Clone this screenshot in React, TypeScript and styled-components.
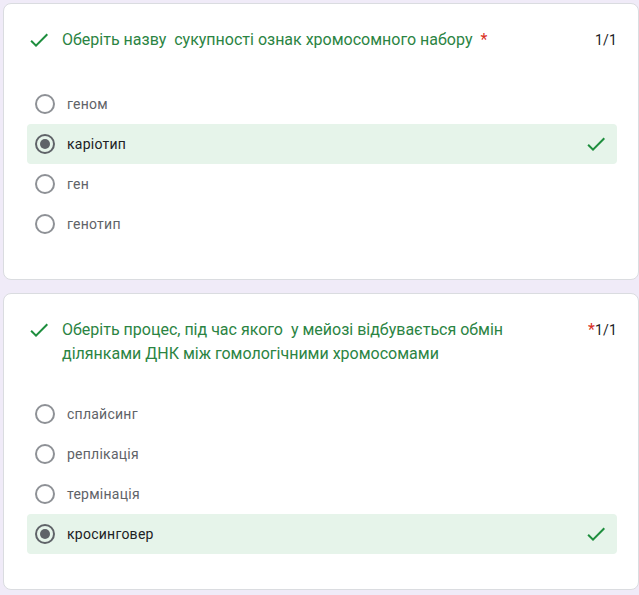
import React from "react";
import styled, { createGlobalStyle } from "styled-components";

const GlobalStyle = createGlobalStyle`
  html, body {
    margin: 0;
    padding: 0;
    background: #f0ebf8;
    overflow: hidden;
  }
  body {
    font-family: Roboto, "Noto Sans", Arial, sans-serif;
  }
`;

const Page = styled.div`
  display: flex;
  flex-direction: column;
  gap: 13px;
  padding: 3px 0 0 3px;
  width: 636px;
`;

const Card = styled.section`
  background: #ffffff;
  border: 1px solid #dadce0;
  border-radius: 8px;
  padding: 24px 21px 35px 23px;
`;

const Header = styled.div`
  display: flex;
  align-items: flex-start;
  min-height: 28px;
`;

const IconBox = styled.span`
  flex: 0 0 24px;
  width: 24px;
  height: 24px;
  display: flex;
  align-items: center;
  justify-content: center;
  margin-right: 11px;
`;

const TitleText = styled.div`
  flex: 0 1 auto;
  font-size: 16px;
  line-height: 24px;
  color: #2b8443;
  white-space: pre-wrap;
`;

const Asterisk = styled.span<{ $gap: number }>`
  flex: 0 0 auto;
  margin-left: ${(p) => p.$gap}px;
  color: #d93025;
  font-size: 16px;
  line-height: 24px;
`;

const Spacer = styled.div`
  flex: 1 1 0;
  min-width: 0;
`;

const Points = styled.span`
  flex: 0 0 auto;
  font-size: 14px;
  line-height: 24px;
  color: #202124;
  letter-spacing: 0.2px;
`;

const Options = styled.div`
  display: flex;
  flex-direction: column;
  margin-top: 28px;
`;

const Row = styled.div<{ $correct?: boolean }>`
  display: flex;
  align-items: center;
  height: 40px;
  padding: 0 9px 0 8px;
  border-radius: 4px;
  background: ${(p) => (p.$correct ? "#e6f4ea" : "transparent")};
`;

const Radio = styled.span<{ $checked?: boolean }>`
  box-sizing: border-box;
  flex: 0 0 20px;
  width: 20px;
  height: 20px;
  border-radius: 50%;
  border: 2px solid ${(p) => (p.$checked ? "#5f6368" : "#8e9196")};
  display: flex;
  align-items: center;
  justify-content: center;
  &::after {
    content: "";
    display: ${(p) => (p.$checked ? "block" : "none")};
    width: 10px;
    height: 10px;
    border-radius: 50%;
    background: #5f6368;
  }
`;

const OptionLabel = styled.span<{ $checked?: boolean }>`
  flex: 1 1 auto;
  margin-left: 12px;
  font-size: 14px;
  letter-spacing: 0.25px;
  color: ${(p) => (p.$checked ? "#202124" : "#5f6368")};
`;

const Check = ({ size = 24 }: { size?: number }) => (
  <svg width={size} height={size} viewBox="0 0 24 24" aria-hidden="true">
    <path
      d="M9 16.17L4.83 12l-1.42 1.41L9 19 21 7l-1.41-1.41z"
      fill="#1e8e3e"
    />
  </svg>
);

type Option = { label: string; checked?: boolean };

type Question = {
  title: string;
  starGap: number;
  options: Option[];
};

const questions: Question[] = [
  {
    title: "Оберіть назву  сукупності ознак хромосомного набору",
    starGap: 8,
    options: [
      { label: "геном" },
      { label: "каріотип", checked: true },
      { label: "ген" },
      { label: "генотип" },
    ],
  },
  {
    title:
      "Оберіть процес, під час якого  у мейозі відбувається обмін ділянками ДНК між гомологічними хромосомами",
    starGap: 8,
    options: [
      { label: "сплайсинг" },
      { label: "реплікація" },
      { label: "термінація" },
      { label: "кросинговер", checked: true },
    ],
  },
];

export default function App() {
  return (
    <>
      <GlobalStyle />
      <Page>
        {questions.map((q, qi) => (
          <Card key={qi}>
            <Header>
              <IconBox>
                <Check />
              </IconBox>
              <TitleText>{q.title}</TitleText>
              <Asterisk $gap={q.starGap}>*</Asterisk>
              <Spacer />
              <Points>1/1</Points>
            </Header>
            <Options>
              {q.options.map((o, oi) => (
                <Row key={oi} $correct={o.checked}>
                  <Radio $checked={o.checked} />
                  <OptionLabel $checked={o.checked}>{o.label}</OptionLabel>
                  {o.checked && <Check />}
                </Row>
              ))}
            </Options>
          </Card>
        ))}
      </Page>
    </>
  );
}
